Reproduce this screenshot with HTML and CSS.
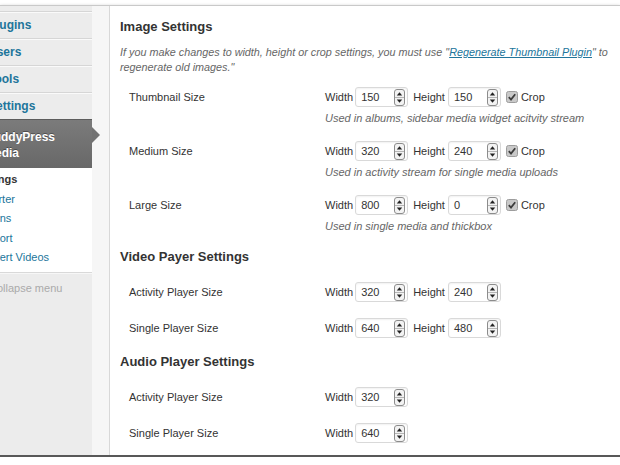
FILE: index.html
```html
<!DOCTYPE html>
<html>
<head>
<meta charset="utf-8">
<title>BuddyPress Media Settings</title>
<link rel="stylesheet" href="styles.css">
</head>
<body>
<div class="window">
  <nav class="sidebar">
    <ul class="menu">
      <li class="item"><span class="item-label">Plugins</span></li>
      <li class="item"><span class="item-label">Users</span></li>
      <li class="item"><span class="item-label">Tools</span></li>
      <li class="item"><span class="item-label">Settings</span></li>
      <li class="item current"><span class="item-label">BuddyPress<br>Media</span></li>
    </ul>
    <ul class="submenu">
      <li class="sub active">Settings</li>
      <li class="sub">Importer</li>
      <li class="sub">Addons</li>
      <li class="sub">Support</li>
      <li class="sub">Convert Videos</li>
    </ul>
    <div class="collapse">Collapse menu</div>
    <div class="sidebar-fill"></div>
  </nav>
  <div class="gutter"></div>
  <main class="content">
    <h3 class="title first">Image Settings</h3>
    <p class="note">If you make changes to width, height or crop settings, you must use "<a class="link" href="#">Regenerate Thumbnail Plugin</a>" to regenerate old images."</p>

    <div class="row">
      <div class="row-label">Thumbnail Size</div>
      <div class="row-fields">
        <div class="fields">
          <span class="flabel">Width</span>
          <span class="num"><span class="num-value">150</span><svg class="spin" width="11" height="17" viewBox="0 0 11 17"><rect x=".5" y=".5" width="10" height="16" rx="2.5" fill="#f3f3f3" stroke="#8c8c8c"/><line x1="1" y1="8.5" x2="10" y2="8.5" stroke="#b5b5b5"/><path d="M5.5 3.3 L8.2 6.6 H2.8 Z" fill="#222"/><path d="M5.5 13.7 L8.2 10.4 H2.8 Z" fill="#222"/></svg></span>
          <span class="flabel gap">Height</span>
          <span class="num second"><span class="num-value">150</span><svg class="spin" width="11" height="17" viewBox="0 0 11 17"><rect x=".5" y=".5" width="10" height="16" rx="2.5" fill="#f3f3f3" stroke="#8c8c8c"/><line x1="1" y1="8.5" x2="10" y2="8.5" stroke="#b5b5b5"/><path d="M5.5 3.3 L8.2 6.6 H2.8 Z" fill="#222"/><path d="M5.5 13.7 L8.2 10.4 H2.8 Z" fill="#222"/></svg></span>
          <svg class="check" width="12" height="12" viewBox="0 0 12 12"><rect x=".5" y=".5" width="11" height="11" rx="2" fill="#c9c9c9" stroke="#9d9d9d"/><path d="M2.8 6.2 L5 8.6 L9.2 3.2" fill="none" stroke="#3c3c3c" stroke-width="1.8"/></svg>
          <span class="flabel crop">Crop</span>
        </div>
        <div class="desc">Used in albums, sidebar media widget acitvity stream</div>
      </div>
    </div>

    <div class="row">
      <div class="row-label">Medium Size</div>
      <div class="row-fields">
        <div class="fields">
          <span class="flabel">Width</span>
          <span class="num"><span class="num-value">320</span><svg class="spin" width="11" height="17" viewBox="0 0 11 17"><rect x=".5" y=".5" width="10" height="16" rx="2.5" fill="#f3f3f3" stroke="#8c8c8c"/><line x1="1" y1="8.5" x2="10" y2="8.5" stroke="#b5b5b5"/><path d="M5.5 3.3 L8.2 6.6 H2.8 Z" fill="#222"/><path d="M5.5 13.7 L8.2 10.4 H2.8 Z" fill="#222"/></svg></span>
          <span class="flabel gap">Height</span>
          <span class="num second"><span class="num-value">240</span><svg class="spin" width="11" height="17" viewBox="0 0 11 17"><rect x=".5" y=".5" width="10" height="16" rx="2.5" fill="#f3f3f3" stroke="#8c8c8c"/><line x1="1" y1="8.5" x2="10" y2="8.5" stroke="#b5b5b5"/><path d="M5.5 3.3 L8.2 6.6 H2.8 Z" fill="#222"/><path d="M5.5 13.7 L8.2 10.4 H2.8 Z" fill="#222"/></svg></span>
          <svg class="check" width="12" height="12" viewBox="0 0 12 12"><rect x=".5" y=".5" width="11" height="11" rx="2" fill="#c9c9c9" stroke="#9d9d9d"/><path d="M2.8 6.2 L5 8.6 L9.2 3.2" fill="none" stroke="#3c3c3c" stroke-width="1.8"/></svg>
          <span class="flabel crop">Crop</span>
        </div>
        <div class="desc">Used in activity stream for single media uploads</div>
      </div>
    </div>

    <div class="row">
      <div class="row-label">Large Size</div>
      <div class="row-fields">
        <div class="fields">
          <span class="flabel">Width</span>
          <span class="num"><span class="num-value">800</span><svg class="spin" width="11" height="17" viewBox="0 0 11 17"><rect x=".5" y=".5" width="10" height="16" rx="2.5" fill="#f3f3f3" stroke="#8c8c8c"/><line x1="1" y1="8.5" x2="10" y2="8.5" stroke="#b5b5b5"/><path d="M5.5 3.3 L8.2 6.6 H2.8 Z" fill="#222"/><path d="M5.5 13.7 L8.2 10.4 H2.8 Z" fill="#222"/></svg></span>
          <span class="flabel gap">Height</span>
          <span class="num second"><span class="num-value">0</span><svg class="spin" width="11" height="17" viewBox="0 0 11 17"><rect x=".5" y=".5" width="10" height="16" rx="2.5" fill="#f3f3f3" stroke="#8c8c8c"/><line x1="1" y1="8.5" x2="10" y2="8.5" stroke="#b5b5b5"/><path d="M5.5 3.3 L8.2 6.6 H2.8 Z" fill="#222"/><path d="M5.5 13.7 L8.2 10.4 H2.8 Z" fill="#222"/></svg></span>
          <svg class="check" width="12" height="12" viewBox="0 0 12 12"><rect x=".5" y=".5" width="11" height="11" rx="2" fill="#c9c9c9" stroke="#9d9d9d"/><path d="M2.8 6.2 L5 8.6 L9.2 3.2" fill="none" stroke="#3c3c3c" stroke-width="1.8"/></svg>
          <span class="flabel crop">Crop</span>
        </div>
        <div class="desc">Used in single media and thickbox</div>
      </div>
    </div>

    <h3 class="title">Video Payer Settings</h3>

    <div class="row">
      <div class="row-label">Activity Player Size</div>
      <div class="row-fields">
        <div class="fields">
          <span class="flabel">Width</span>
          <span class="num"><span class="num-value">320</span><svg class="spin" width="11" height="17" viewBox="0 0 11 17"><rect x=".5" y=".5" width="10" height="16" rx="2.5" fill="#f3f3f3" stroke="#8c8c8c"/><line x1="1" y1="8.5" x2="10" y2="8.5" stroke="#b5b5b5"/><path d="M5.5 3.3 L8.2 6.6 H2.8 Z" fill="#222"/><path d="M5.5 13.7 L8.2 10.4 H2.8 Z" fill="#222"/></svg></span>
          <span class="flabel gap">Height</span>
          <span class="num second"><span class="num-value">240</span><svg class="spin" width="11" height="17" viewBox="0 0 11 17"><rect x=".5" y=".5" width="10" height="16" rx="2.5" fill="#f3f3f3" stroke="#8c8c8c"/><line x1="1" y1="8.5" x2="10" y2="8.5" stroke="#b5b5b5"/><path d="M5.5 3.3 L8.2 6.6 H2.8 Z" fill="#222"/><path d="M5.5 13.7 L8.2 10.4 H2.8 Z" fill="#222"/></svg></span>
        </div>
      </div>
    </div>

    <div class="row">
      <div class="row-label">Single Player Size</div>
      <div class="row-fields">
        <div class="fields">
          <span class="flabel">Width</span>
          <span class="num"><span class="num-value">640</span><svg class="spin" width="11" height="17" viewBox="0 0 11 17"><rect x=".5" y=".5" width="10" height="16" rx="2.5" fill="#f3f3f3" stroke="#8c8c8c"/><line x1="1" y1="8.5" x2="10" y2="8.5" stroke="#b5b5b5"/><path d="M5.5 3.3 L8.2 6.6 H2.8 Z" fill="#222"/><path d="M5.5 13.7 L8.2 10.4 H2.8 Z" fill="#222"/></svg></span>
          <span class="flabel gap">Height</span>
          <span class="num second"><span class="num-value">480</span><svg class="spin" width="11" height="17" viewBox="0 0 11 17"><rect x=".5" y=".5" width="10" height="16" rx="2.5" fill="#f3f3f3" stroke="#8c8c8c"/><line x1="1" y1="8.5" x2="10" y2="8.5" stroke="#b5b5b5"/><path d="M5.5 3.3 L8.2 6.6 H2.8 Z" fill="#222"/><path d="M5.5 13.7 L8.2 10.4 H2.8 Z" fill="#222"/></svg></span>
        </div>
      </div>
    </div>

    <h3 class="title">Audio Player Settings</h3>

    <div class="row">
      <div class="row-label">Activity Player Size</div>
      <div class="row-fields">
        <div class="fields">
          <span class="flabel">Width</span>
          <span class="num"><span class="num-value">320</span><svg class="spin" width="11" height="17" viewBox="0 0 11 17"><rect x=".5" y=".5" width="10" height="16" rx="2.5" fill="#f3f3f3" stroke="#8c8c8c"/><line x1="1" y1="8.5" x2="10" y2="8.5" stroke="#b5b5b5"/><path d="M5.5 3.3 L8.2 6.6 H2.8 Z" fill="#222"/><path d="M5.5 13.7 L8.2 10.4 H2.8 Z" fill="#222"/></svg></span>
        </div>
      </div>
    </div>

    <div class="row">
      <div class="row-label">Single Player Size</div>
      <div class="row-fields">
        <div class="fields">
          <span class="flabel">Width</span>
          <span class="num"><span class="num-value">640</span><svg class="spin" width="11" height="17" viewBox="0 0 11 17"><rect x=".5" y=".5" width="10" height="16" rx="2.5" fill="#f3f3f3" stroke="#8c8c8c"/><line x1="1" y1="8.5" x2="10" y2="8.5" stroke="#b5b5b5"/><path d="M5.5 3.3 L8.2 6.6 H2.8 Z" fill="#222"/><path d="M5.5 13.7 L8.2 10.4 H2.8 Z" fill="#222"/></svg></span>
        </div>
      </div>
    </div>
  </main>
</div>
</body>
</html>
```

FILE: styles.css
```css
* { box-sizing: border-box; }

html, body {
  margin: 0;
  padding: 0;
  background: #fff;
}

body {
  font-family: "Liberation Sans", Arial, sans-serif;
  color: #333;
  overflow: hidden;
}

.window {
  margin-top: 5px;
  height: 452px;
  border-top: 1px solid #c9c9c9;
  border-bottom: 2px solid #585858;
  box-shadow: 0 2px 4px rgba(0, 0, 0, 0.45);
  display: flex;
  background: #fff;
}

/* ---------- sidebar ---------- */
.sidebar {
  width: 92px;
  flex: none;
  background: #ececec;
  display: flex;
  flex-direction: column;
  white-space: nowrap;
}

.menu, .submenu {
  list-style: none;
  margin: 0;
}

.menu {
  padding: 5px 0 0;
}

.item {
  height: 27px;
  border-top: 1px solid #d6d6d6;
  box-shadow: inset 0 1px 0 #fafafa;
  font-size: 12px;
  font-weight: bold;
  line-height: 26px;
  color: #21759b;
}

.item-label {
  display: block;
  margin-left: -12px;
}

.item.current {
  position: relative;
  height: auto;
  border-top: 1px solid #5c5c5c;
  box-shadow: none;
  background: linear-gradient(#7b7b7b, #686868);
  color: #fff;
  line-height: 16px;
  padding: 9px 0 7px;
  text-shadow: 0 -1px 0 rgba(0, 0, 0, 0.35);
}

.item.current .item-label {
  margin-left: -15px;
}

.item.current::after {
  content: "";
  position: absolute;
  right: -8px;
  top: 7px;
  width: 0;
  height: 0;
  border-top: 8px solid transparent;
  border-bottom: 8px solid transparent;
  border-left: 8px solid #727272;
}

.submenu {
  background: #fff;
  padding: 2px 0 4px;
  font-size: 11px;
  line-height: 19.5px;
  color: #21759b;
}

.sub {
  text-indent: -26px;
}

.sub.active {
  font-weight: bold;
  color: #333;
}

.collapse {
  border-top: 1px solid #d9d9d9;
  box-shadow: inset 0 1px 0 #f7f7f7;
  font-size: 11px;
  line-height: 31px;
  color: #aaa;
  text-indent: -11px;
}

.sidebar-fill {
  flex: 1;
}

.gutter {
  width: 17px;
  flex: none;
  background: #f6f6f6;
}

/* ---------- content ---------- */
.content {
  flex: 1;
  min-width: 0;
  border-left: 1px solid #d8d8d8;
  background: #fff;
  padding-left: 10px;
}

.title {
  font-size: 13px;
  font-weight: bold;
  line-height: 17px;
  color: #333;
  margin: 7px 0 9px;
}

.title.first {
  margin: 12px 0 0;
}

.note {
  margin: 10px 0 4px;
  font-size: 10.8px;
  font-style: italic;
  line-height: 15px;
  color: #666;
}

.link {
  color: #21759b;
  text-decoration: underline;
}

.row {
  display: flex;
  padding: 7px 0 7px 9px;
}

.row-label {
  width: 196px;
  flex: none;
  font-size: 11px;
  line-height: 22px;
  color: #333;
}

.row-fields {
  display: flex;
  flex-direction: column;
}

.fields {
  display: flex;
  align-items: center;
  height: 22px;
  font-size: 11px;
  color: #333;
}

.flabel.gap {
  margin-left: 5px;
}

.num {
  display: flex;
  align-items: center;
  width: 53px;
  height: 20px;
  margin-left: 2px;
  padding: 0 2px 0 5px;
  border: 1px solid #d9d9d9;
  border-radius: 3px;
  background: #fff;
  box-shadow: inset 0 1px 2px rgba(0, 0, 0, 0.06);
}

.num.second {
  margin-left: 3px;
}

.num-value {
  flex: 1;
  font-size: 11px;
  color: #333;
}

.spin {
  display: block;
  flex: none;
}

.check {
  display: block;
  flex: none;
  margin-left: 5px;
}

.flabel.crop {
  margin-left: 3px;
}

.desc {
  margin-top: 3px;
  font-size: 11px;
  font-style: italic;
  line-height: 15px;
  color: #666;
}
```
